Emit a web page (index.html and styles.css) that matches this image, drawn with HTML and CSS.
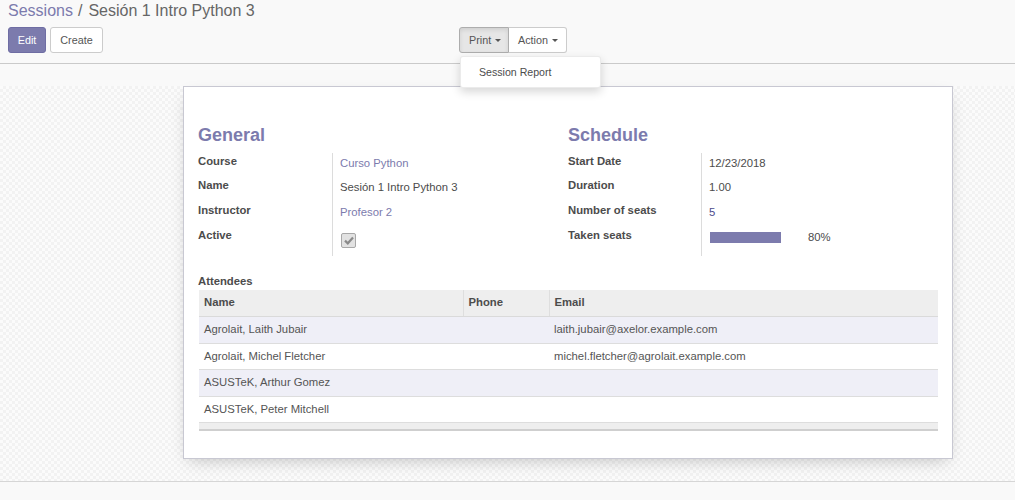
FILE: index.html
```html
<!DOCTYPE html>
<html>
<head>
<meta charset="utf-8">
<link rel="stylesheet" href="styles.css">
</head>
<body>
<div class="cp">
  <div class="breadcrumb"><a class="bc-link">Sessions</a><span class="bc-sep">/</span><span class="bc-active">Sesión 1 Intro Python 3</span></div>
  <div class="cp-row">
    <div class="cp-buttons">
      <button class="btn btn-primary">Edit</button>
      <button class="btn btn-default">Create</button>
    </div>
    <div class="cp-sidebar">
      <div class="btn-group">
        <button class="btn btn-default active">Print<span class="caret"></span></button>
        <button class="btn btn-default">Action<span class="caret"></span></button>
        <div class="dropdown-menu"><span class="dropdown-item">Session Report</span></div>
      </div>
    </div>
  </div>
</div>
<div class="statusbar"></div>
<div class="sheet-bg">
  <div class="sheet">
    <div class="groups">
      <div class="group group-left">
        <div class="sep-title">General</div>
        <div class="fields">
          <div class="frow r1"><div class="flabel">Course</div><div class="fval"><span class="link">Curso Python</span></div></div>
          <div class="frow r2"><div class="flabel">Name</div><div class="fval">Sesión 1 Intro Python 3</div></div>
          <div class="frow r3"><div class="flabel">Instructor</div><div class="fval"><span class="link">Profesor 2</span></div></div>
          <div class="frow r4"><div class="flabel">Active</div><div class="fval"><span class="checkbox"><svg width="10" height="9" viewBox="0 0 10 9"><path d="M1 4.6 L3.8 7.3 L9 1.6" fill="none" stroke="#8a8a8a" stroke-width="2.2"/></svg></span></div></div>
        </div>
      </div>
      <div class="group group-right">
        <div class="sep-title">Schedule</div>
        <div class="fields">
          <div class="frow r1"><div class="flabel">Start Date</div><div class="fval">12/23/2018</div></div>
          <div class="frow r2"><div class="flabel">Duration</div><div class="fval">1.00</div></div>
          <div class="frow r3"><div class="flabel">Number of seats</div><div class="fval"><span class="num">5</span></div></div>
          <div class="frow r4"><div class="flabel">Taken seats</div><div class="fval progress-cell"><div class="progress"><div class="progress-bar" style="width:80%"></div></div><span class="pct">80%</span></div></div>
        </div>
      </div>
    </div>
    <div class="att-label">Attendees</div>
    <table class="list">
      <thead>
        <tr><th class="c-name">Name</th><th class="c-phone">Phone</th><th class="c-email">Email</th></tr>
      </thead>
      <tbody>
        <tr class="odd"><td>Agrolait, Laith Jubair</td><td></td><td>laith.jubair@axelor.example.com</td></tr>
        <tr class="even"><td>Agrolait, Michel Fletcher</td><td></td><td>michel.fletcher@agrolait.example.com</td></tr>
        <tr class="odd"><td>ASUSTeK, Arthur Gomez</td><td></td><td></td></tr>
        <tr class="even"><td>ASUSTeK, Peter Mitchell</td><td></td><td></td></tr>
      </tbody>
      <tfoot>
        <tr><td></td><td></td><td></td></tr>
      </tfoot>
    </table>
  </div>
</div>
<div class="bottom"></div>
</body>
</html>
```

FILE: styles.css
```css
html, body {
  margin: 0;
  padding: 0;
  height: 500px;
  overflow: hidden;
}
body {
  background: #f9f9f9;
  font-family: "Liberation Sans", Arial, sans-serif;
  font-size: 11.3px;
  color: #4c4c4c;
}
.cp {
  border-bottom: 1px solid #cacaca;
  padding: 1px 8px 0 8px;
  box-sizing: border-box;
  height: 64px;
}
.breadcrumb {
  font-size: 16px;
  line-height: 20px;
  height: 20px;
}
.bc-link { color: #7c7bad; }
.bc-sep { color: #666; margin: 0 6px 0 5px; }
.bc-active { color: #666; }
.cp-row {
  margin-top: 6px;
  display: grid;
  grid-template-columns: 451px auto;
}
.cp-buttons { display: flex; gap: 4px; }
.btn {
  height: 26px;
  box-sizing: border-box;
  font-family: "Liberation Sans", Arial, sans-serif;
  font-size: 10.8px;
  border-radius: 3px;
  border: 1px solid #cccccc;
  background: #fff;
  color: #555;
  padding: 0 9px;
  margin: 0;
  display: flex;
  align-items: center;
}
.btn-primary {
  background: #7c7bad;
  border-color: #6e6da3;
  color: #fff;
  width: 38px;
  justify-content: center;
  padding: 0;
}
.cp-buttons .btn-default { width: 53px; justify-content: center; padding: 0; }
.btn-group {
  display: flex;
  position: relative;
}
.btn-group .btn { padding: 0 9px 0 9px; }
.btn-group .btn:first-child {
  border-radius: 3px 0 0 3px;
  width: 50px;
}
.btn-group .btn:nth-child(2) {
  border-radius: 0 3px 3px 0;
  border-left: none;
  width: 58px;
}
.btn.active {
  background: #e6e6e6;
  border-color: #adadad;
  box-shadow: inset 0 2px 4px rgba(0,0,0,0.10);
}
.caret {
  display: inline-block;
  width: 0;
  height: 0;
  border-left: 3px solid transparent;
  border-right: 3px solid transparent;
  border-top: 3px solid #555;
  margin-left: 4px;
  margin-top: 1px;
}
.dropdown-menu {
  position: absolute;
  top: 29px;
  left: 1px;
  width: 141px;
  height: 32px;
  box-sizing: border-box;
  background: #fff;
  border: 1px solid rgba(0,0,0,0.08);
  border-radius: 3px;
  box-shadow: 0 4px 10px rgba(0,0,0,0.16);
  padding-left: 18px;
  display: flex;
  align-items: center;
  z-index: 10;
}
.dropdown-item {
  font-size: 10.6px;
  color: #4c4c4c;
}
.statusbar {
  height: 22px;
}
.sheet-bg {
  box-sizing: border-box;
  border-bottom: 1px solid #d6d6d6;
  height: 396px;
  background-color: #f7f7f7;
  background-image: repeating-conic-gradient(#f2f2f2 0 25%, #fbfbfb 0 50%);
  background-size: 6px 6px;
  padding-left: 183px;
}
.sheet {
  width: 770px;
  height: 373px;
  box-sizing: border-box;
  background: #fff;
  border: 1px solid #c8c8d2;
  box-shadow: 0 6px 16px -6px rgba(0,0,0,0.25);
  padding: 37px 14px 0 14px;
}
.groups {
  display: grid;
  grid-template-columns: 370px 370px;
}
.sep-title {
  font-size: 18px;
  font-weight: bold;
  color: #7c7bad;
  line-height: 22px;
  height: 22px;
  margin-bottom: 7px;
}
.frow {
  display: flex;
}
.r1 { height: 24px; }
.r2 { height: 25px; }
.r3 { height: 25px; }
.r4 { height: 29px; }
.flabel {
  width: 135px;
  border-right: 1px solid #dcdcdc;
  font-weight: bold;
  line-height: 13px;
  padding-top: 2px;
  box-sizing: border-box;
  color: #4c4c4c;
}
.group-right .flabel { width: 134px; }
.fval {
  padding-left: 7px;
  padding-top: 4px;
  line-height: 13px;
  color: #4c4c4c;
}
.link { color: #7c7bad; }
.num { color: #4c4c8c; }
.checkbox {
  display: flex;
  align-items: center;
  justify-content: center;
  width: 15px;
  height: 15px;
  box-sizing: border-box;
  margin-top: 2px;
  margin-left: 1px;
  border: 1px solid #a8a8a8;
  border-radius: 2px;
  background: #e2e2e2;
}
.progress-cell {
  display: flex;
  align-items: flex-start;
}
.progress {
  width: 89px;
  height: 11px;
  margin-top: 1px;
  margin-left: 1px;
}
.progress-bar {
  height: 11px;
  background: #7c7bad;
}
.pct {
  margin-left: 9px;
}
.att-label {
  font-weight: bold;
  line-height: 13px;
  margin-top: 19px;
  height: 15px;
}
.list {
  border-collapse: collapse;
  width: 739px;
  margin-left: 1px;
  table-layout: fixed;
}
.list th, .list td {
  padding: 6px 5px 0 5px;
  line-height: 13px;
  vertical-align: top;
  text-align: left;
  box-sizing: border-box;
}
.list th {
  background: #eeeeee;
  font-weight: bold;
  height: 26px;
  border-bottom: 1px solid #dadada;
  border-left: 1px solid #dedede;
  color: #4c4c4c;
}
.list th:first-child { border-left: none; }
.c-name { width: 264px; }
.c-phone { width: 86px; }
.c-email { width: 389px; }
.list tbody td {
  color: #555;
  border-bottom: 1px solid #dddddd;
}
.list tr.odd td { background: #efeff7; height: 27px; }
.list tr.even td { height: 26px; }
.list tfoot td {
  background: #eeeeee;
  height: 8px;
  padding: 0;
  border-bottom: 2px solid #cfcfcf;
}
.bottom { height: 18px; }
```
